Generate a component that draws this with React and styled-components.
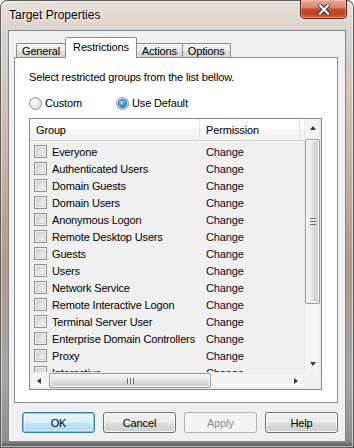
import React from 'react';
import styled, { createGlobalStyle, css } from 'styled-components';

const GlobalStyle = createGlobalStyle`
  html, body {
    margin: 0;
    padding: 0;
    width: 354px;
    height: 448px;
    overflow: hidden;
    background: #fff;
  }
  * { box-sizing: border-box; }
`;

const UI_FONT = `"Liberation Sans", Arial, sans-serif`;

// window frame (aero glass)
const Window = styled.div`
  width: 354px;
  height: 448px;
  display: flex;
  flex-direction: column;
  padding: 0 8px 6px;
  border-radius: 7px 7px 0 0;
  font-family: ${UI_FONT};
  background: linear-gradient(
    to bottom,
    #e6e1db 0px,
    #dcd3cb 30px,
    #cbb9ab 140px,
    #b09a8b 260px,
    #a9a3a0 380px,
    #8f8f8f 440px,
    #4e4e4e 448px
  );
  box-shadow: inset 0 0 0 1px #5e5a57, inset 0 0 0 2px rgba(255, 255, 255, 0.55);
`;

const TitleBar = styled.div`
  flex: 0 0 30px;
  display: flex;
  align-items: flex-start;
`;

const Title = styled.div`
  padding-top: 8px;
  margin-left: 1px;
  font-size: 12px;
  color: #000;
  text-shadow: 0 0 6px rgba(255, 255, 255, 0.95), 0 0 2px rgba(255, 255, 255, 0.9);
`;

const CloseButton = styled.div`
  width: 47px;
  height: 19px;
  margin-left: auto;
  margin-right: -1px;
  display: flex;
  align-items: center;
  justify-content: center;
  border: 1px solid #5a2115;
  border-top: none;
  border-radius: 0 0 5px 5px;
  background: linear-gradient(
    to bottom,
    #e9a898 0%,
    #d88370 42%,
    #c5472c 52%,
    #c13f24 78%,
    #dc6a48 100%
  );
  box-shadow: inset 0 0 0 1px rgba(255, 210, 190, 0.45);
`;

const Client = styled.div`
  flex: 1;
  min-height: 0;
  display: flex;
  flex-direction: column;
  background: #f0f0f0;
  border: 1px solid #7f8891;
  padding: 6px 7px 8px 5px;
`;

const TabStrip = styled.div`
  flex: 0 0 21px;
  display: flex;
  align-items: flex-end;
  padding-left: 2px;
  margin-bottom: -1px;
`;

const Tab = styled.div`
  display: flex;
  align-items: center;
  font-size: 11px;
  letter-spacing: -0.15px;
  color: #000;
  border: 1px solid #898c95;
  border-bottom: none;
  border-radius: 2px 2px 0 0;
  & + & { margin-left: -1px; }
  ${({ $active }) =>
    $active
      ? css`
          position: relative;
          z-index: 2;
          height: 21px;
          padding: 0 7px 3px;
          background: #fff;
        `
      : css`
          height: 15px;
          padding: 0 5px;
          background: linear-gradient(to bottom, #f3f3f3 0%, #ebebeb 50%, #dedede 51%, #d2d2d2 100%);
        `}
`;

const Panel = styled.div`
  position: relative;
  z-index: 1;
  flex: 1;
  min-height: 0;
  display: flex;
  flex-direction: column;
  background: #fff;
  border: 1px solid #898c95;
  padding: 12px 15px 12px 14px;
`;

const Text = styled.div`
  font-size: 11px;
  letter-spacing: -0.15px;
  line-height: 14px;
  color: #000;
`;

const RadioRow = styled.div`
  display: flex;
  align-items: center;
  gap: 34px;
  margin-top: 12px;
  height: 14px;
`;

const RadioOption = styled.label`
  display: flex;
  align-items: center;
  gap: 3px;
  font-size: 11px;
  letter-spacing: -0.15px;
  color: #000;
`;

const RadioDot = styled.span`
  position: relative;
  width: 13px;
  height: 13px;
  border-radius: 50%;
  border: 1px solid #8e8f8f;
  background: radial-gradient(circle at 40% 35%, #ffffff 0%, #e2e2e2 60%, #cfcfcf 100%);
  ${({ $checked }) =>
    $checked &&
    css`
      &::after {
        content: '';
        position: absolute;
        left: 2px;
        top: 2px;
        width: 7px;
        height: 7px;
        border-radius: 50%;
        background: radial-gradient(circle at 40% 35%, #b9e6ff 0%, #3a9be0 45%, #1b5e9c 100%);
        box-shadow: 0 0 0 1px #2b6aa1;
      }
    `}
`;

// list view with scrollbars
const ListBox = styled.div`
  flex: 1;
  min-height: 0;
  margin-top: 8px;
  display: grid;
  grid-template-columns: 1fr 17px;
  grid-template-rows: minmax(0, 1fr) 17px;
  border: 1px solid #828790;
  background: #f0f0f0;
`;

const ListContent = styled.div`
  overflow: hidden;
  display: flex;
  flex-direction: column;
  min-height: 0;
`;

const HeaderRow = styled.div`
  flex: 0 0 22px;
  display: grid;
  grid-template-columns: 170px 100px 1fr;
  background: linear-gradient(to bottom, #ffffff 0%, #ffffff 45%, #f6f7f8 46%, #f1f2f3 100%);
  border-bottom: 1px solid #d5d5d5;
`;

const HeaderCell = styled.div`
  display: flex;
  align-items: center;
  padding-left: 6px;
  font-size: 11px;
  letter-spacing: -0.15px;
  color: #000;
  border-right: 1px solid #e3e4e6;
  &:last-child { border-right: none; }
`;

const Rows = styled.div`
  padding-top: 2px;
`;

const Row = styled.div`
  height: 17px;
  display: grid;
  grid-template-columns: 170px 100px;
  align-items: center;
  font-size: 11px;
  letter-spacing: -0.15px;
  color: #000;
  white-space: nowrap;
`;

const GroupCell = styled.div`
  display: flex;
  align-items: center;
  gap: 5px;
  padding-left: 4px;
  overflow: hidden;
`;

const PermCell = styled.div`
  padding-left: 6px;
  color: #0a0a1e;
`;

const CheckBox = styled.span`
  flex: 0 0 13px;
  width: 13px;
  height: 13px;
  border: 1px solid #8e8f8f;
  background: #f4f4f4;
  box-shadow: inset 0 0 0 1px #f4f4f4, inset 0 0 0 2px #d4d4d4;
  background-image: linear-gradient(135deg, #cbcfd5 0%, #f6f6f6 100%);
  background-size: 7px 7px;
  background-position: 2px 2px;
  background-repeat: no-repeat;
`;

const VScroll = styled.div`
  display: flex;
  flex-direction: column;
  min-height: 0;
  background: linear-gradient(to right, #e6e6e6 0px, #f4f4f4 2px, #f4f4f4 14px, #e6e6e6 17px);
`;

const HScroll = styled.div`
  display: flex;
  align-items: stretch;
  background: linear-gradient(to bottom, #e6e6e6 0px, #f4f4f4 2px, #f4f4f4 14px, #e6e6e6 17px);
`;

const Corner = styled.div`
  background: #f0f0f0;
`;

const ArrowBox = styled.div`
  flex: 0 0 17px;
  display: flex;
  align-items: center;
  justify-content: center;
`;

const arrowShapes = {
  up: css`border-width: 0 3.5px 4px; border-color: transparent transparent #3d3d3d;`,
  down: css`border-width: 4px 3.5px 0; border-color: #3d3d3d transparent transparent;`,
  left: css`border-width: 3.5px 4px 3.5px 0; border-color: transparent #3d3d3d transparent transparent;`,
  right: css`border-width: 3.5px 0 3.5px 4px; border-color: transparent transparent transparent #3d3d3d;`,
};

const Arrow = styled.span`
  width: 0;
  height: 0;
  border-style: solid;
  ${({ $dir }) => arrowShapes[$dir]}
`;

const Thumb = styled.div`
  display: flex;
  align-items: center;
  justify-content: center;
  border: 1px solid #9a9a9a;
  border-radius: 2px;
  box-shadow: inset 0 0 0 1px rgba(255, 255, 255, 0.8);
  ${({ $vertical }) =>
    $vertical
      ? css`
          flex: 0 0 165px;
          margin: 3px 1px 0;
          background: linear-gradient(to right, #f4f4f4 0%, #eaeaea 45%, #dadada 55%, #d0d0d0 100%);
        `
      : css`
          flex: 0 0 162px;
          margin: 1px 0 1px 2px;
          background: linear-gradient(to bottom, #f4f4f4 0%, #eaeaea 45%, #dadada 55%, #d0d0d0 100%);
        `}
`;

const Grip = styled.span`
  ${({ $vertical }) =>
    $vertical
      ? css`
          width: 6px;
          height: 7px;
          background: repeating-linear-gradient(to bottom, #6f6f6f 0, #6f6f6f 1px, #f6f6f6 1px, #f6f6f6 2px, transparent 2px, transparent 3px);
        `
      : css`
          width: 7px;
          height: 6px;
          background: repeating-linear-gradient(to right, #6f6f6f 0, #6f6f6f 1px, #f6f6f6 1px, #f6f6f6 2px, transparent 2px, transparent 3px);
        `}
`;

const Spacer = styled.div`
  flex: 1;
`;

const ButtonRow = styled.div`
  flex: 0 0 21px;
  display: flex;
  justify-content: flex-end;
  gap: 8px;
  margin-top: 9px;
`;

const Button = styled.button`
  width: 73px;
  height: 21px;
  padding: 0;
  font-family: ${UI_FONT};
  font-size: 11px;
  letter-spacing: -0.15px;
  color: #000;
  border: 1px solid #707070;
  border-radius: 3px;
  background: linear-gradient(to bottom, #f2f2f2 0%, #ebebeb 50%, #dddddd 51%, #cfcfcf 100%);
  box-shadow: inset 0 0 0 1px rgba(255, 255, 255, 0.75);
  ${({ $default }) =>
    $default &&
    css`
      border-color: #3c7fb1;
      background: linear-gradient(to bottom, #eaf6fd 0%, #d9f0fc 50%, #bee6fd 51%, #a7d9f5 100%);
      box-shadow: inset 0 0 0 1px #5fd0f7, inset 0 0 0 2px rgba(255, 255, 255, 0.5);
    `}
  &:disabled {
    color: #8d8d8d;
    border-color: #adb2b5;
    background: #f4f4f4;
    box-shadow: none;
  }
`;

const groups = [
  'Everyone',
  'Authenticated Users',
  'Domain Guests',
  'Domain Users',
  'Anonymous Logon',
  'Remote Desktop Users',
  'Guests',
  'Users',
  'Network Service',
  'Remote Interactive Logon',
  'Terminal Server User',
  'Enterprise Domain Controllers',
  'Proxy',
  'Interactive',
];

const CloseIcon = () => (
  <svg width="12" height="11" viewBox="0 0 12 11">
    <path d="M2 1.5 L10 9.5 M10 1.5 L2 9.5" stroke="#3b2a26" strokeWidth="4" strokeLinecap="square" />
    <path d="M2 1.5 L10 9.5 M10 1.5 L2 9.5" stroke="#ffffff" strokeWidth="2.2" strokeLinecap="square" />
  </svg>
);

const App = () => (
  <>
    <GlobalStyle />
    <Window>
      <TitleBar>
        <Title>Target Properties</Title>
        <CloseButton>
          <CloseIcon />
        </CloseButton>
      </TitleBar>
      <Client>
        <TabStrip>
          <Tab>General</Tab>
          <Tab $active>Restrictions</Tab>
          <Tab>Actions</Tab>
          <Tab>Options</Tab>
        </TabStrip>
        <Panel>
          <Text>Select restricted groups from the list bellow.</Text>
          <RadioRow>
            <RadioOption>
              <RadioDot />
              Custom
            </RadioOption>
            <RadioOption>
              <RadioDot $checked />
              Use Default
            </RadioOption>
          </RadioRow>
          <ListBox>
            <ListContent>
              <HeaderRow>
                <HeaderCell>Group</HeaderCell>
                <HeaderCell>Permission</HeaderCell>
                <HeaderCell />
              </HeaderRow>
              <Rows>
                {groups.map((g) => (
                  <Row key={g}>
                    <GroupCell>
                      <CheckBox />
                      {g}
                    </GroupCell>
                    <PermCell>Change</PermCell>
                  </Row>
                ))}
              </Rows>
            </ListContent>
            <VScroll>
              <ArrowBox><Arrow $dir="up" /></ArrowBox>
              <Thumb $vertical><Grip $vertical /></Thumb>
              <Spacer />
              <ArrowBox><Arrow $dir="down" /></ArrowBox>
            </VScroll>
            <HScroll>
              <ArrowBox><Arrow $dir="left" /></ArrowBox>
              <Thumb><Grip /></Thumb>
              <Spacer />
              <ArrowBox><Arrow $dir="right" /></ArrowBox>
            </HScroll>
            <Corner />
          </ListBox>
        </Panel>
        <ButtonRow>
          <Button $default>OK</Button>
          <Button>Cancel</Button>
          <Button disabled>Apply</Button>
          <Button>Help</Button>
        </ButtonRow>
      </Client>
    </Window>
  </>
);

export default App;
